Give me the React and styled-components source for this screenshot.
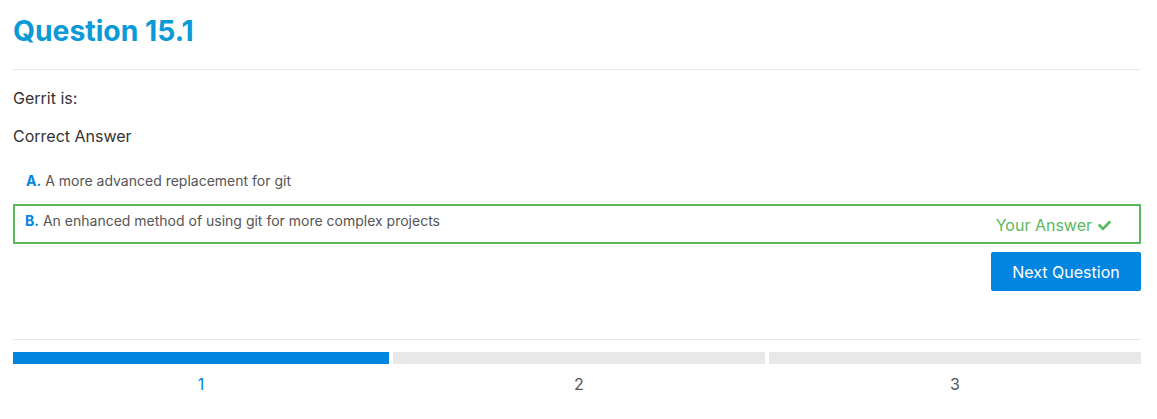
import React from 'react';
import styled, { createGlobalStyle } from 'styled-components';
import { FaCheck } from 'react-icons/fa';

const GlobalStyle = createGlobalStyle`
  body {
    margin: 0;
    background: #fff;
    font-family: Inter, "Noto Sans", sans-serif;
    color: #333;
  }
`;

const Page = styled.div`
  padding: 0 16px 0 13px;
`;

const Title = styled.h1`
  margin: 0;
  padding-top: 14px;
  height: 69px;
  box-sizing: border-box;
  font-size: 28.3px;
  font-weight: 700;
  color: #0a9ad8;
`;

const Rule = styled.hr`
  margin: 0;
  border: 0;
  border-top: 1px solid #e8e8e8;
`;

const Prompt = styled.p`
  margin: 18px 0 0;
  font-size: 16px;
  line-height: 20px;
`;

const Label = styled.p`
  margin: 18px 0 0;
  font-size: 16px;
  line-height: 20px;
`;

const Options = styled.div`
  margin-top: 24px;
  display: flex;
  flex-direction: column;
  gap: 3px;
`;

const Option = styled.div`
  display: flex;
  align-items: flex-start;
  justify-content: space-between;
  border: 2px solid ${p => (p.$chosen ? '#5cb85c' : 'transparent')};
  padding: ${p => (p.$chosen ? '6px 10px 10px 10px' : '0 10px 10px 11px')};
  font-size: 14px;
  line-height: 17px;
  color: #555;
`;

const Letter = styled.span`
  color: #0085e0;
  font-weight: 700;
  margin-right: 4px;
`;

const YourAnswer = styled.span`
  display: flex;
  align-items: center;
  gap: 6px;
  color: #5cb85c;
  font-size: 16px;
  line-height: 20px;
  margin-top: 3px;
  margin-bottom: -3px;
  margin-right: 18px;
`;

const Actions = styled.div`
  display: flex;
  justify-content: flex-end;
  margin-top: 8px;
`;

const Button = styled.button`
  background: #0085e0;
  color: #fff;
  border: 0;
  border-radius: 2px;
  width: 150px;
  height: 39px;
  font-family: Inter, "Noto Sans", sans-serif;
  font-size: 16px;
  cursor: pointer;
`;

const Footer = styled.div`
  margin-top: 48px;
`;

const Steps = styled.div`
  display: grid;
  grid-template-columns: 376px 1fr 1fr;
  gap: 4px;
  margin-top: 12px;
`;

const Step = styled.div`
  display: flex;
  flex-direction: column;
  align-items: center;
`;

const Bar = styled.div`
  align-self: stretch;
  height: 12px;
  background: ${p => (p.$active ? '#0085e0' : '#e8e8e8')};
`;

const StepNum = styled.span`
  margin-top: 10px;
  font-size: 16px;
  line-height: 20px;
  color: ${p => (p.$active ? '#0085e0' : '#555')};
`;

export default function App() {
  return (
    <Page>
      <GlobalStyle />
      <Title>Question 15.1</Title>
      <Rule />
      <Prompt>Gerrit is:</Prompt>
      <Label>Correct Answer</Label>
      <Options>
        <Option>
          <span><Letter>A.</Letter>A more advanced replacement for git</span>
        </Option>
        <Option $chosen>
          <span><Letter>B.</Letter>An enhanced method of using git for more complex projects</span>
          <YourAnswer>Your Answer <FaCheck size={13} /></YourAnswer>
        </Option>
      </Options>
      <Actions>
        <Button>Next Question</Button>
      </Actions>
      <Footer>
        <Rule />
        <Steps>
          {[1, 2, 3].map(n => (
            <Step key={n}>
              <Bar $active={n === 1} />
              <StepNum $active={n === 1}>{n}</StepNum>
            </Step>
          ))}
        </Steps>
      </Footer>
    </Page>
  );
}
